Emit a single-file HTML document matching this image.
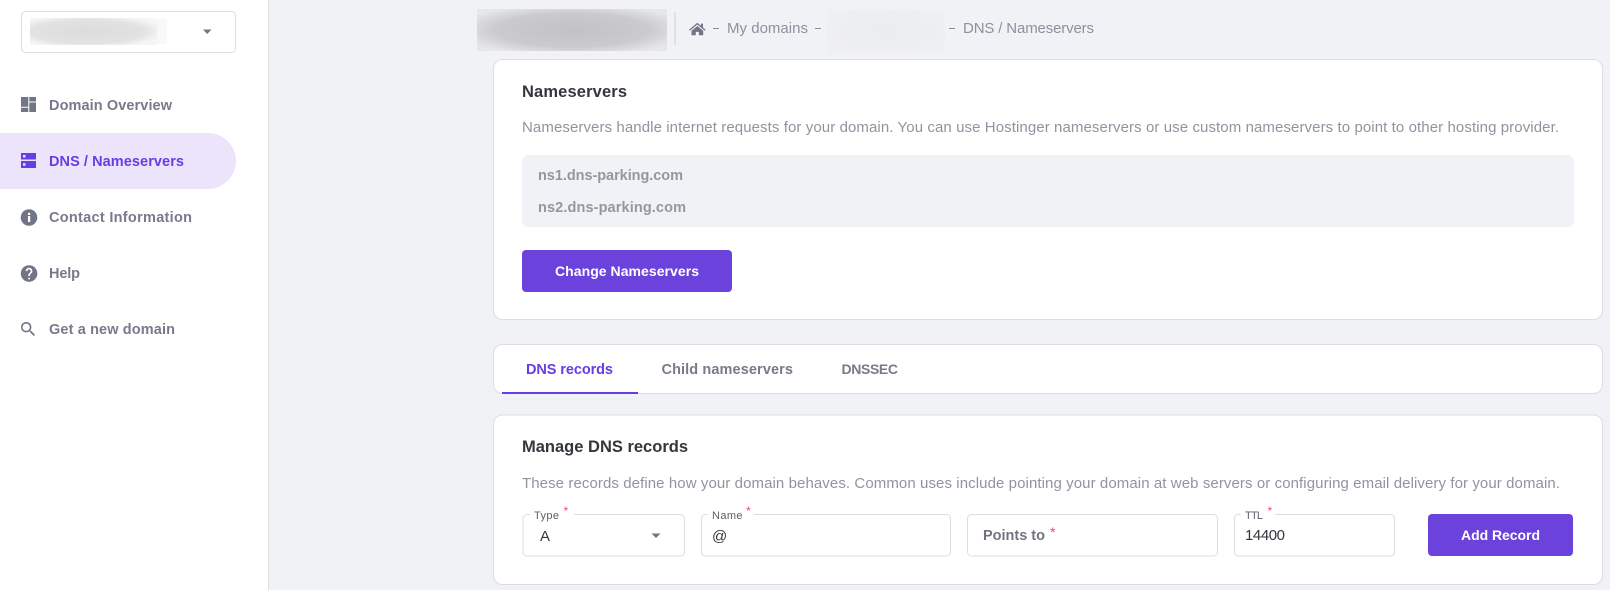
<!DOCTYPE html>
<html lang="en">
<head>
<meta charset="utf-8">
<title>DNS / Nameservers</title>
<style>
html,body{margin:0;padding:0;width:1610px;height:590px;overflow:hidden;background:#f1f2f6}
svg{display:block}
text{font-family:"Liberation Sans",sans-serif}
.m{font-size:14.5px;font-weight:700;fill:#787a8b}
.a{font-size:14.5px;font-weight:700;fill:#673de6}
.b{font-size:15px;font-weight:400;fill:#8f909d}
.d{font-size:15px;font-weight:400;fill:#9293a0}
.h{font-size:16.5px;font-weight:700;fill:#36353d}
.w{font-size:14px;font-weight:700;fill:#fff}
.n{font-size:14.5px;font-weight:700;fill:#95969f}
.l{font-size:11px;font-weight:400;fill:#5f5f69}
.v{font-size:15px;font-weight:400;fill:#36353d}
.s{font-size:12px;fill:#f0408c}
</style>
</head>
<body>
<svg width="1610" height="590" viewBox="0 0 1610 590" xmlns="http://www.w3.org/2000/svg">
<defs>
<radialGradient id="g1" cx=".5" cy=".5" r=".62">
<stop offset="0" stop-color="#c2c2c6"/>
<stop offset=".65" stop-color="#cbcbcf"/>
<stop offset="1" stop-color="#e6e7ea"/>
</radialGradient>
<radialGradient id="g2" cx=".45" cy=".5" r=".62">
<stop offset="0" stop-color="#dcdcdc"/>
<stop offset=".7" stop-color="#e2e2e2"/>
<stop offset="1" stop-color="#f6f6f6"/>
</radialGradient>
<radialGradient id="g3" cx=".5" cy=".5" r=".66">
<stop offset="0" stop-color="#ebecef"/>
<stop offset="1" stop-color="#eff0f4"/>
</radialGradient>
</defs>

<!-- Sidebar -->
<rect x="0" y="0" width="268" height="590" fill="#fff"/>
<rect x="268" y="0" width="1" height="590" fill="#dfe0e5"/>
<rect x="21.500" y="11.500" width="214" height="41" rx="4" fill="#fff" stroke="#dcdde2"/>
<rect x="30" y="18" width="127" height="27" fill="url(#g2)"/>
<rect x="157" y="19" width="10" height="25" fill="#f8f8f8"/>
<path d="M203 29.500h8.500l-4.250 4.500z" fill="#727586"/>

<path d="M0 133h208a28 28 0 0 1 0 56H0z" fill="#ebe4fb"/>

<path d="M21 97h7.300v9.700h-7.300zM29.300 97h6.700v4.500h-6.700zM29.300 102.500h6.700v9.500h-6.700zM21 107.700h7.300v4.300h-7.300z" fill="#727586"/>
<text class="m" x="49" y="110" textLength="123" lengthAdjust="spacing">Domain Overview</text>

<path d="M21 153h15v6.500h-15zM21 161h15v7h-15z" fill="#673de6"/>
<rect x="23" y="155" width="2.500" height="2.500" fill="#ebe4fb"/>
<rect x="23" y="163.200" width="2.500" height="2.500" fill="#ebe4fb"/>
<text class="a" x="49" y="166" textLength="135" lengthAdjust="spacing">DNS / Nameservers</text>

<circle cx="29" cy="217.500" r="8.300" fill="#727586"/>
<rect x="28" y="216" width="2.200" height="6" fill="#fff"/>
<rect x="28" y="212.800" width="2.200" height="2.200" fill="#fff"/>
<text class="m" x="49" y="222" textLength="143" lengthAdjust="spacing">Contact Information</text>

<g transform="translate(19.100 263.600) scale(.83)"><path d="M12 2C6.480 2 2 6.480 2 12s4.480 10 10 10 10-4.480 10-10S17.520 2 12 2zm1 17h-2v-2h2v2zm2.070-7.750l-.9.920C13.450 12.900 13 13.500 13 15h-2v-.5c0-1.100.45-2.100 1.170-2.830l1.240-1.260c.37-.36.59-.86.59-1.410 0-1.100-.9-2-2-2s-2 .9-2 2H8c0-2.210 1.790-4 4-4s4 1.790 4 4c0 .88-.36 1.680-.93 2.250z" fill="#727586"/></g>
<text class="m" x="49" y="278" textLength="31" lengthAdjust="spacing">Help</text>

<g transform="translate(18.600 319.600) scale(.8)"><path d="M15.500 14h-.79l-.28-.27C15.410 12.590 16 11.110 16 9.500 16 5.910 13.090 3 9.500 3S3 5.910 3 9.500 5.910 16 9.500 16c1.610 0 3.090-.59 4.230-1.570l.27.280v.79l5 4.990L20.490 19l-4.990-5zm-6 0C7.010 14 5 11.990 5 9.500S7.010 5 9.500 5 14 7.010 14 9.500 11.990 14 9.500 14z" fill="#727586"/></g>
<text class="m" x="49" y="334" textLength="126" lengthAdjust="spacing">Get a new domain</text>

<!-- Breadcrumb -->
<rect x="477" y="9" width="190" height="42" fill="url(#g1)"/>
<rect x="674.500" y="12" width="1" height="33" fill="#cfd0d6"/>
<path d="M697.300 22.800l-8.300 6.900.8 1 7.500-6.200 7.500 6.200.8-1-2.600-2.200v-3.900h-2v2.200zM691.500 30.800v4.400h4.300v-3.300h3.100v3.300h4.300v-4.400l-5.800-4.800z" fill="#727586"/>
<rect x="713" y="28" width="6" height="1" fill="#8a8b99"/>
<text class="b" x="727" y="33" textLength="81" lengthAdjust="spacing">My domains</text>
<rect x="815" y="28" width="6" height="1" fill="#8a8b99"/>
<rect x="827" y="10" width="118" height="43" fill="url(#g3)"/>
<rect x="949" y="28" width="6" height="1" fill="#8a8b99"/>
<text class="b" x="963" y="33" textLength="131" lengthAdjust="spacing">DNS / Nameservers</text>

<!-- Nameservers card -->
<rect x="493.500" y="59.500" width="1109" height="260" rx="9" fill="#fff" stroke="#dcdde2"/>
<text class="h" x="522" y="97" textLength="105" lengthAdjust="spacing">Nameservers</text>
<text class="d" x="522" y="132" textLength="1037" lengthAdjust="spacing">Nameservers handle internet requests for your domain. You can use Hostinger nameservers or use custom nameservers to point to other hosting provider.</text>
<rect x="522" y="155" width="1052" height="72" rx="7" fill="#f1f2f6"/>
<text class="n" x="538" y="180" textLength="145" lengthAdjust="spacing">ns1.dns-parking.com</text>
<text class="n" x="538" y="212" textLength="148" lengthAdjust="spacing">ns2.dns-parking.com</text>
<rect x="522" y="250" width="210" height="42" rx="4" fill="#6c42dd"/>
<text class="w" x="555" y="276" textLength="144" lengthAdjust="spacing">Change Nameservers</text>

<!-- Tabs card -->
<rect x="493.500" y="344.500" width="1109" height="49" rx="9" fill="#fff" stroke="#dcdde2"/>
<text class="a" x="526" y="374" textLength="87" lengthAdjust="spacing">DNS records</text>
<rect x="502" y="392" width="136" height="2" fill="#673de6"/>
<text class="m" x="661.500" y="374" textLength="131.500" lengthAdjust="spacing">Child nameservers</text>
<text class="m" x="841.500" y="374" textLength="56.500" lengthAdjust="spacing" style="font-size:14px">DNSSEC</text>

<!-- Manage DNS card -->
<rect x="493.500" y="415" width="1109" height="169.500" rx="9" fill="#fff" stroke="#dcdde2"/>
<text class="h" x="522" y="452" textLength="166" lengthAdjust="spacing">Manage DNS records</text>
<text class="d" x="522" y="488" textLength="1038" lengthAdjust="spacing">These records define how your domain behaves. Common uses include pointing your domain at web servers or configuring email delivery for your domain.</text>

<rect x="523" y="514.500" width="161.500" height="41.500" rx="4" fill="#fff" stroke="#dcdde2"/>
<rect x="530" y="512" width="44" height="5" fill="#fff"/>
<text class="l" x="534" y="519" textLength="25" lengthAdjust="spacing">Type</text>
<text class="s" x="563.500" y="515">*</text>
<text class="v" x="540" y="541">A</text>
<path d="M651.500 533.500h9l-4.500 4.500z" fill="#727586"/>

<rect x="701.500" y="514.500" width="249" height="41.500" rx="4" fill="#fff" stroke="#dcdde2"/>
<rect x="708" y="512" width="46" height="5" fill="#fff"/>
<text class="l" x="712" y="519" textLength="30.500" lengthAdjust="spacing">Name</text>
<text class="s" x="746" y="515">*</text>
<text class="v" x="712" y="541">@</text>

<rect x="967.500" y="514.500" width="250" height="41.500" rx="4" fill="#fff" stroke="#dcdde2"/>
<text x="983" y="540" textLength="62" lengthAdjust="spacing" style="font-size:14.5px;font-weight:700;fill:#73737e">Points to</text>
<text class="s" x="1050" y="537" style="font-size:14px">*</text>

<rect x="1234.500" y="514.500" width="160" height="41.500" rx="4" fill="#fff" stroke="#dcdde2"/>
<rect x="1241" y="512" width="34" height="5" fill="#fff"/>
<text class="l" x="1245" y="519" textLength="18" lengthAdjust="spacing">TTL</text>
<text class="s" x="1267.500" y="515">*</text>
<text class="v" x="1245" y="540" textLength="40" lengthAdjust="spacing">14400</text>

<rect x="1428" y="514" width="145" height="42" rx="4" fill="#6c42dd"/>
<text class="w" x="1461" y="540" textLength="79" lengthAdjust="spacing">Add Record</text>
</svg>
</body>
</html>
